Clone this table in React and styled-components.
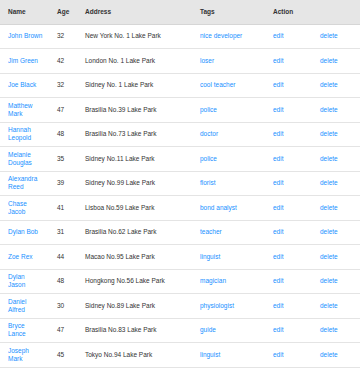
import React from "react";
import styled, { createGlobalStyle } from "styled-components";

const Global = createGlobalStyle`
  html, body { margin: 0; padding: 0; background: #fff; }
  body { font-family: "Liberation Sans", Arial, sans-serif; }
`;

const Table = styled.table`
  width: 360px;
  border-collapse: collapse;
  table-layout: fixed;
  font-size: 6.5px;
  color: #333;
`;

const HeadCell = styled.th`
  height: 24px;
  padding: 0 0 0 ${(p) => p.$pl || 0}px;
  background: #e6e6e6;
  border-bottom: 1px solid #d6d6d6;
  text-align: left;
  font-weight: bold;
  color: #333;
  box-sizing: border-box;
`;

const Row = styled.tr`
  height: 24.5px;
  border-bottom: 1px solid #e4e4e4;
`;

const Cell = styled.td`
  padding: 0 0 0 ${(p) => p.$pl || 0}px;
  vertical-align: middle;
  line-height: 8px;
  color: ${(p) => (p.$link ? "#1890ff" : "#333")};
  box-sizing: border-box;
`;

const data = [
  ["John Brown", 32, "New York No. 1 Lake Park", "nice developer"],
  ["Jim Green", 42, "London No. 1 Lake Park", "loser"],
  ["Joe Black", 32, "Sidney No. 1 Lake Park", "cool teacher"],
  ["Matthew\nMark", 47, "Brasilia No.39 Lake Park", "police"],
  ["Hannah\nLeopold", 48, "Brasilia No.73 Lake Park", "doctor"],
  ["Melanie\nDouglas", 35, "Sidney No.11 Lake Park", "police"],
  ["Alexandra\nReed", 39, "Sidney No.99 Lake Park", "florist"],
  ["Chase\nJacob", 41, "Lisboa No.59 Lake Park", "bond analyst"],
  ["Dylan Bob", 31, "Brasilia No.62 Lake Park", "teacher"],
  ["Zoe Rex", 44, "Macao No.95 Lake Park", "linguist"],
  ["Dylan\nJason", 48, "Hongkong No.56 Lake Park", "magician"],
  ["Daniel\nAlfred", 30, "Sidney No.89 Lake Park", "physiologist"],
  ["Bryce\nLance", 47, "Brasilia No.83 Lake Park", "guide"],
  ["Joseph\nMark", 45, "Tokyo No.94 Lake Park", "linguist"],
];

const Name = ({ text }) => {
  const parts = text.split("\n");
  return parts.map((p, i) => (
    <React.Fragment key={i}>
      {p}
      {i < parts.length - 1 && <br />}
    </React.Fragment>
  ));
};

export default function App() {
  return (
    <>
      <Global />
      <Table>
        <colgroup>
          <col style={{ width: 57 }} />
          <col style={{ width: 28 }} />
          <col style={{ width: 115 }} />
          <col style={{ width: 73 }} />
          <col style={{ width: 47 }} />
          <col style={{ width: 40 }} />
        </colgroup>
        <thead>
          <tr>
            <HeadCell $pl={8}>Name</HeadCell>
            <HeadCell>Age</HeadCell>
            <HeadCell>Address</HeadCell>
            <HeadCell>Tags</HeadCell>
            <HeadCell colSpan={2}>Action</HeadCell>
          </tr>
        </thead>
        <tbody>
          {data.map(([n, a, addr, tag]) => (
            <Row key={n}>
              <Cell $pl={8} $link>
                <Name text={n} />
              </Cell>
              <Cell>{a}</Cell>
              <Cell>{addr}</Cell>
              <Cell $link>{tag}</Cell>
              <Cell $link>edit</Cell>
              <Cell $link>delete</Cell>
            </Row>
          ))}
        </tbody>
      </Table>
    </>
  );
}
